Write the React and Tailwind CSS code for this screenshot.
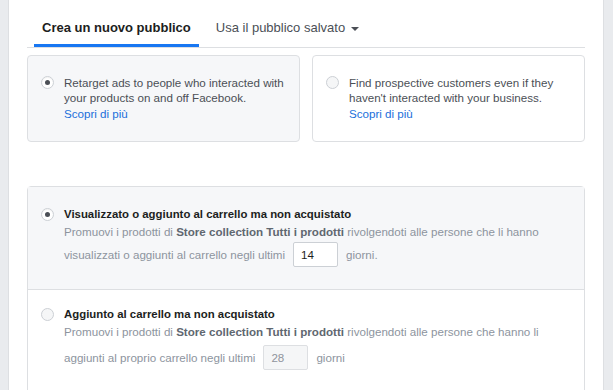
import { useState } from "react";

function Radio({ checked }) {
  return (
    <span
      className={
        "flex h-[13px] w-[13px] shrink-0 items-center justify-center rounded-full border border-[#ccd0d5] " +
        (checked ? "bg-white shadow-[inset_0_1px_1px_rgba(0,0,0,0.05)]" : "bg-[#f5f6f7]")
      }
    >
      {checked && <span className="h-[5px] w-[5px] rounded-full bg-[#4b4f56]" />}
    </span>
  );
}

export default function App() {
  const [days] = useState("14");

  return (
    <div
      className="flex h-[390px] w-[613px] overflow-hidden bg-white text-[#1c1e21]"
      style={{ fontFamily: "'Liberation Sans', Arial, sans-serif" }}
    >
      {/* left strip */}
      <div className="w-[9px] shrink-0 border-r border-[#dddfe2] bg-[#e9ebee]" />

      <div className="flex-1 pl-[18px] pr-[18px]">
        {/* Tabs */}
        <div className="flex h-[48px] items-end border-b border-[#dddfe2] pl-[7px]">
          <div className="flex h-full items-center border-b-[3px] border-[#1877f2] px-[8px] pt-[12px] text-[13px] font-bold text-[#1c1e21]">
            Crea un nuovo pubblico
          </div>
          <div className="ml-[17px] flex h-full items-center gap-[6px] pt-[9px] text-[13px] text-[#4b4f56]">
            Usa il pubblico salvato
            <span className="mt-[1px] h-0 w-0 border-x-[4px] border-t-[4px] border-x-transparent border-t-[#4b4f56]" />
          </div>
        </div>

        {/* Option cards */}
        <div className="mt-[7px] grid grid-cols-2 gap-[12px]">
          <div className="flex h-[87px] gap-[10px] rounded-[4px] border border-[#dddfe2] bg-[#f6f7f9] pl-[13px] pr-[6px] pt-[19px]">
            <div className="pt-[1px]">
              <Radio checked />
            </div>
            <div className="text-[11.6px] leading-[15px] text-[#4b4f56]">
              <p>Retarget ads to people who interacted with your products on and off Facebook.</p>
              <a href="#" className="mt-[1px] block text-[#216fdb]">
                Scopri di più
              </a>
            </div>
          </div>
          <div className="flex h-[87px] gap-[10px] rounded-[4px] border border-[#dddfe2] bg-white pl-[13px] pr-[6px] pt-[19px]">
            <div className="pt-[1px]">
              <Radio />
            </div>
            <div className="text-[11.6px] leading-[15px] text-[#4b4f56]">
              <p>Find prospective customers even if they haven't interacted with your business.</p>
              <a href="#" className="mt-[1px] block text-[#216fdb]">
                Scopri di più
              </a>
            </div>
          </div>
        </div>

        {/* Audience rules */}
        <div className="mt-[44px] rounded-t-[4px] border border-[#dddfe2]">
          <div className="flex h-[103px] gap-[10px] border-b border-[#dddfe2] bg-[#f6f7f9] pl-[13px] pt-[20px]">
            <div className="pt-[1px]">
              <Radio checked />
            </div>
            <div className="text-[11.6px] text-[#8d949e]">
              <p className="text-[11.4px] font-bold leading-[15px] text-[#1c1e21]">
                Visualizzato o aggiunto al carrello ma non acquistato
              </p>
              <p className="mt-[2px] leading-[15px]">
                Promuovi i prodotti di <b className="text-[#606770]">Store collection Tutti i prodotti</b> rivolgendoti alle persone che li hanno
              </p>
              <div className="mt-[3px] flex items-center">
                <span>visualizzati o aggiunti al carrello negli ultimi</span>
                <input
                  readOnly
                  value={days}
                  className="ml-[8px] h-[25px] w-[45px] rounded-[2px] border border-[#ccd0d5] bg-white px-[7px] text-[11.6px] text-[#1c1e21] outline-none"
                />
                <span className="ml-[8px]">giorni.</span>
              </div>
            </div>
          </div>

          <div className="flex h-[110px] gap-[10px] bg-white pl-[13px] pt-[17px]">
            <div className="pt-[1px]">
              <Radio />
            </div>
            <div className="text-[11.6px] text-[#8d949e]">
              <p className="text-[11.4px] font-bold leading-[15px] text-[#1c1e21]">
                Aggiunto al carrello ma non acquistato
              </p>
              <p className="mt-[2px] leading-[15px]">
                Promuovi i prodotti di <b className="text-[#606770]">Store collection Tutti i prodotti</b> rivolgendoti alle persone che hanno li
              </p>
              <div className="mt-[6px] flex items-center">
                <span>aggiunti al proprio carrello negli ultimi</span>
                <input
                  readOnly
                  disabled
                  value="28"
                  className="ml-[8px] h-[25px] w-[45px] rounded-[2px] border border-[#dddfe2] bg-[#f5f6f7] px-[7px] text-[11.6px] text-[#90949c] outline-none"
                />
                <span className="ml-[8px]">giorni</span>
              </div>
            </div>
          </div>
        </div>
      </div>

      {/* right strip */}
      <div className="w-[10px] shrink-0 border-l border-[#dddfe2] bg-[#e9ebee]" />
    </div>
  );
}
